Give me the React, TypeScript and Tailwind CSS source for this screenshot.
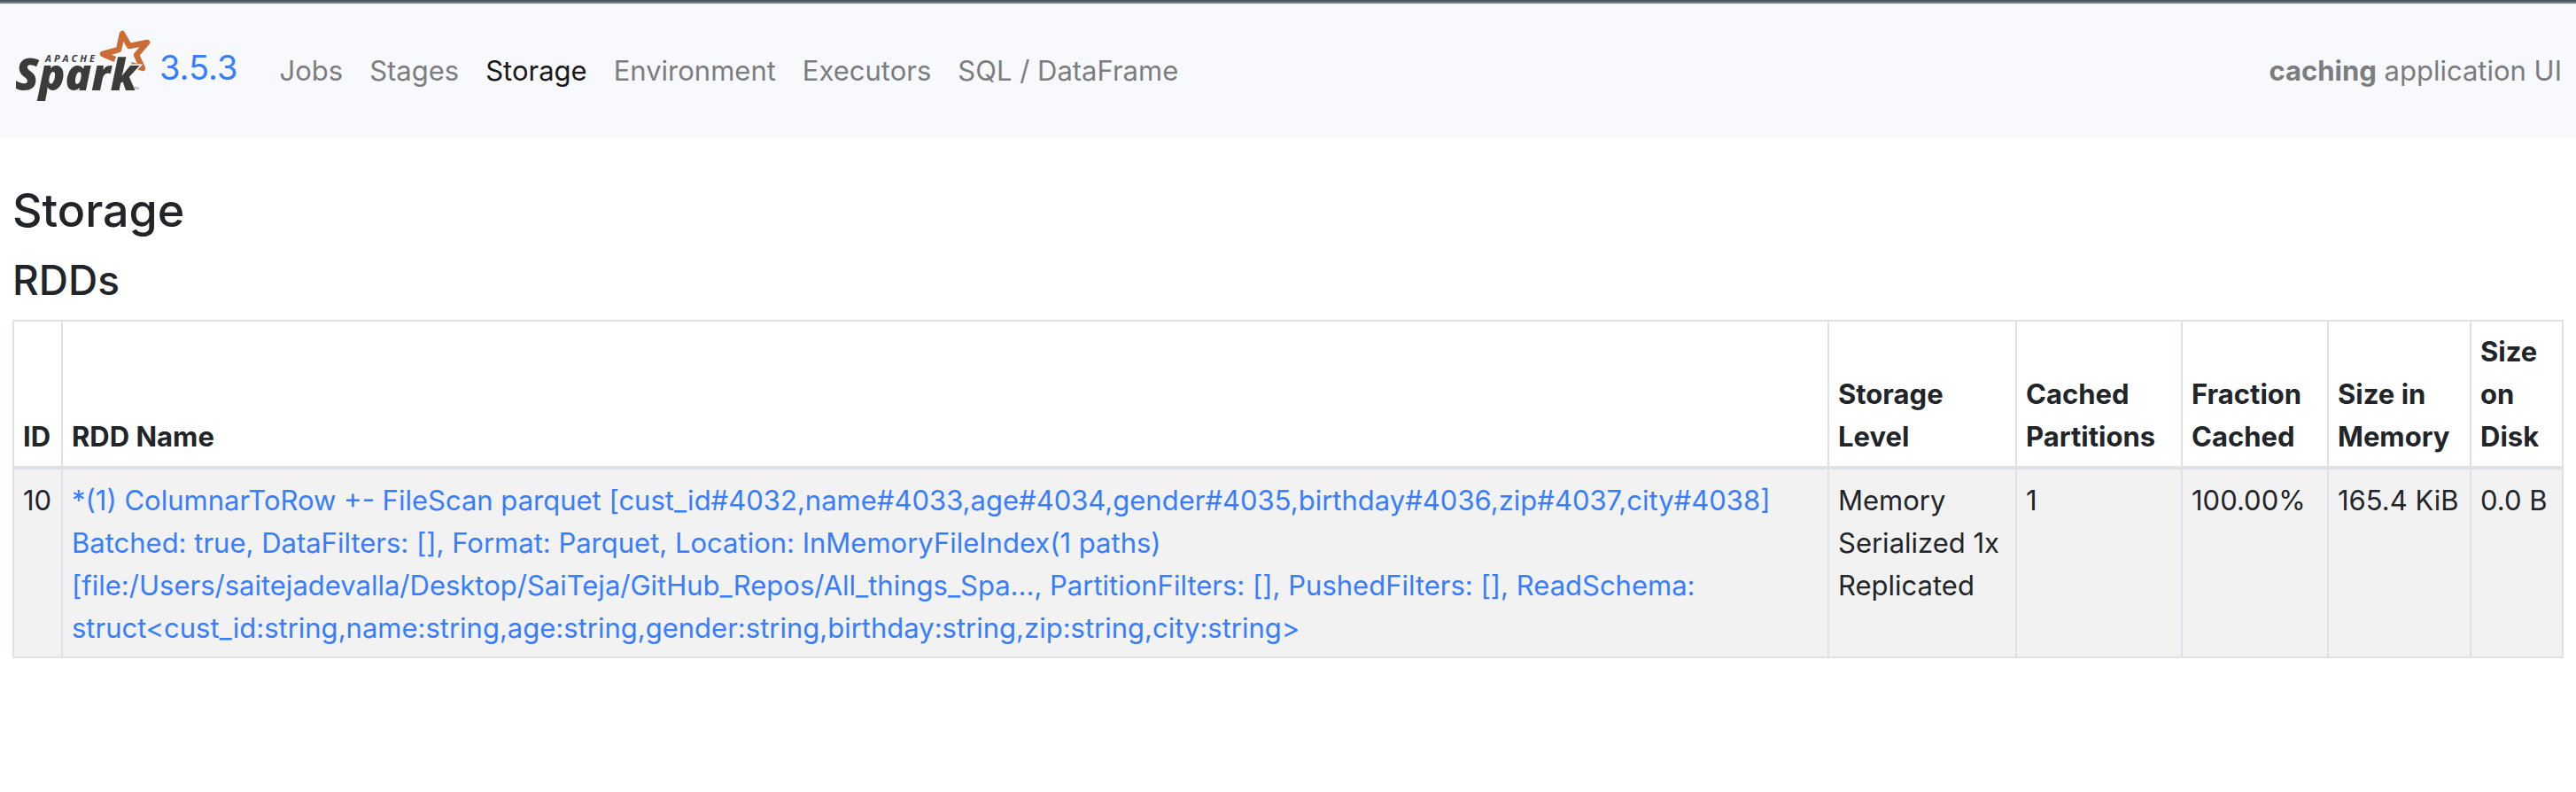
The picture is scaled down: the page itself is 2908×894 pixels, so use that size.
const tabs = ["Jobs", "Stages", "Storage", "Environment", "Executors", "SQL / DataFrame"];

const columns = [
  { title: "ID", width: "w-[55px]" },
  { title: "RDD Name", width: "" },
  { title: "Storage Level", width: "w-[212px]" },
  { title: "Cached Partitions", width: "w-[187px]" },
  { title: "Fraction Cached", width: "w-[165px]" },
  { title: "Size in Memory", width: "w-[161px]" },
  { title: "Size on Disk", width: "w-[104px]" },
];

const rdds = [
  {
    id: 10,
    name: "*(1) ColumnarToRow +- FileScan parquet [cust_id#4032,name#4033,age#4034,gender#4035,birthday#4036,zip#4037,city#4038] Batched: true, DataFilters: [], Format: Parquet, Location: InMemoryFileIndex(1 paths)[file:/Users/saitejadevalla/Desktop/SaiTeja/GitHub_Repos/All_things_Spa..., PartitionFilters: [], PushedFilters: [], ReadSchema: struct<cust_id:string,name:string,age:string,gender:string,birthday:string,zip:string,city:string>",
    level: "Memory Serialized 1x Replicated",
    partitions: "1",
    fraction: "100.00%",
    memory: "165.4 KiB",
    disk: "0.0 B",
  },
];

function SparkLogo() {
  return (
    <svg viewBox="16 36 156 80" className="h-20 w-[156px] shrink-0 overflow-visible" role="img" aria-label="Apache Spark">
      <path
        d="M148 73 L161 77 L154 62 L166 48 L146 52 L138 38 L134 56 L116 61 L130 67"
        fill="none"
        stroke="#cb6b36"
        strokeWidth="6.5"
        strokeLinejoin="round"
      />
      <g fontFamily="'Open Sans', 'Noto Sans', sans-serif" fontStyle="italic" fill="#3b3b39">
        <text x="17" y="102" fontSize="49" fontWeight="800" stroke="#f8f9fc" strokeWidth="3" paintOrder="stroke">Spark</text>
        <text x="51" y="70" fontSize="11" fontWeight="700" letterSpacing="3">APACHE</text>
        <text x="151" y="104" fontSize="8" fontStyle="normal" fill="#8a8a8a">™</text>
      </g>
    </svg>
  );
}

export default function App() {
  const cell = "border-2 border-[#dee2e6] px-[10px] text-left";
  const bodyCell = `${cell} pt-[11px] pb-2`;
  return (
    <div className="min-h-screen bg-white font-['Inter','Liberation_Sans',sans-serif] text-[31px] leading-[48px] text-[#212529]">
      <div className="h-1 border-b-2 border-[#738084] bg-[#4a5862]" />
      <nav className="flex h-[152px] items-center bg-[#f8f9fc] px-4">
        <a href="#" className="flex items-center gap-2 pb-2 text-[38px] text-[#377dff]">
          <SparkLogo />
          <span>3.5.3</span>
        </a>
        <ul className="ml-8 flex grow items-center">
          {tabs.map((tab) => (
            <li key={tab}>
              <a href="#" className={tab === "Storage" ? "block px-[15px] text-[#19191a]" : "block px-[15px] text-[#7c7d7e]"}>
                {tab}
              </a>
            </li>
          ))}
        </ul>
        <span className="text-[#7c7d7e]">
          <strong>caching</strong> application UI
        </span>
      </nav>
      <main className="px-[14px] pt-12">
        <h3 className="mb-4 text-[52px] font-medium leading-[67px]">Storage</h3>
        <h4 className="mb-4 text-[46px] font-medium leading-[58px]">RDDs</h4>
        <table className="w-full table-fixed border-collapse">
          <thead>
            <tr>
              {columns.map((c) => (
                <th key={c.title} scope="col" className={`${cell} ${c.width} border-b-4 pt-[10px] pb-[9px] align-bottom font-bold`}>
                  {c.title}
                </th>
              ))}
            </tr>
          </thead>
          <tbody>
            {rdds.map((r) => (
              <tr key={r.id} className="bg-[#f2f2f2] align-top">
                <td className={bodyCell}>{r.id}</td>
                <td className={bodyCell}>
                  <a href="#" className="text-[#377dff]">{r.name}</a>
                </td>
                <td className={bodyCell}>{r.level}</td>
                <td className={bodyCell}>{r.partitions}</td>
                <td className={bodyCell}>{r.fraction}</td>
                <td className={`${bodyCell} whitespace-nowrap`}>{r.memory}</td>
                <td className={`${bodyCell} whitespace-nowrap`}>{r.disk}</td>
              </tr>
            ))}
          </tbody>
        </table>
      </main>
    </div>
  );
}
